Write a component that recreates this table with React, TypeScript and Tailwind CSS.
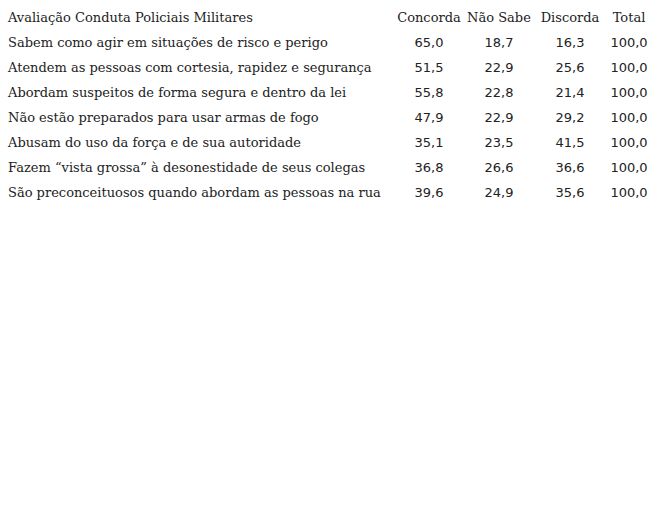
const ROWS: [string, string, string, string, string][] = [
  ['Sabem como agir em situações de risco e perigo', '65,0', '18,7', '16,3', '100,0'],
  ['Atendem as pessoas com cortesia, rapidez e segurança', '51,5', '22,9', '25,6', '100,0'],
  ['Abordam suspeitos de forma segura e dentro da lei', '55,8', '22,8', '21,4', '100,0'],
  ['Não estão preparados para usar armas de fogo', '47,9', '22,9', '29,2', '100,0'],
  ['Abusam do uso da força e de sua autoridade', '35,1', '23,5', '41,5', '100,0'],
  ['Fazem “vista grossa” à desonestidade de seus colegas', '36,8', '26,6', '36,6', '100,0'],
  ['São preconceituosos quando abordam as pessoas na rua', '39,6', '24,9', '35,6', '100,0'],
];

const serif = "font-['DejaVu_Serif',serif]";
const sans = "font-['DejaVu_Sans',sans-serif]";

export default function App() {
  return (
    <div className="w-[657px] h-[514px] bg-white text-[#222] pt-[5px]">
      <div className={`flex h-[25px] items-center text-[13px] ${serif}`}>
        <div className="w-[394px] pl-2">Avaliação Conduta Policiais Militares</div>
        <div className="w-[70px] text-center">Concorda</div>
        <div className="w-[70px] text-center">Não Sabe</div>
        <div className="w-[72px] text-center">Discorda</div>
        <div className="w-[46px] text-center">Total</div>
      </div>
      {ROWS.map(([label, a, b, c, d]) => (
        <div key={label} className="flex h-[25px] items-center">
          <div className={`w-[394px] pl-2 text-[13px] whitespace-nowrap ${serif}`}>{label}</div>
          <div className={`w-[70px] text-center text-[13px] ${sans}`}>{a}</div>
          <div className={`w-[70px] text-center text-[13px] ${sans}`}>{b}</div>
          <div className={`w-[72px] text-center text-[13px] ${sans}`}>{c}</div>
          <div className={`w-[46px] text-center text-[13px] ${sans}`}>{d}</div>
        </div>
      ))}
    </div>
  );
}
